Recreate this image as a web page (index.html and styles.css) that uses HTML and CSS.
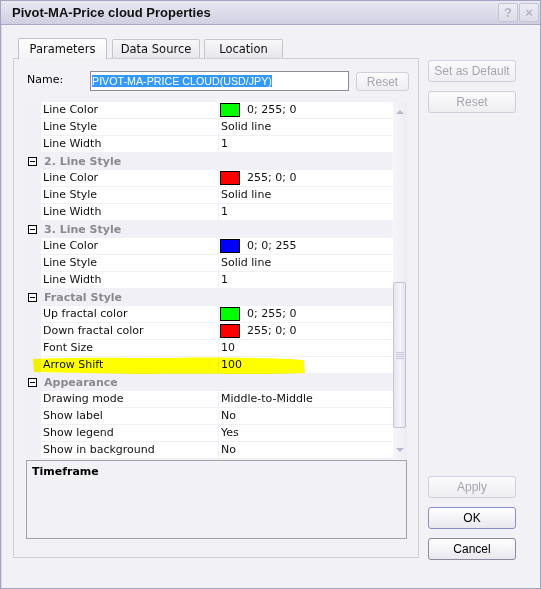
FILE: index.html
```html
<!DOCTYPE html>
<html lang="en">
<head>
    <meta charset="UTF-8">
    <meta name="viewport" content="width=device-width, initial-scale=1.0">
    <title>Pivot-MA-Price cloud Properties</title>
    <link rel="stylesheet" href="styles.css">
</head>
<body>
    <div class="window">
        <div class="titlebar">
            <span class="title">Pivot-MA-Price cloud Properties</span>
            <div class="title-buttons">
                <span class="tbtn">?</span>
                <span class="tbtn">&#215;</span>
            </div>
        </div>

        <div class="client">
            <div class="main">
                <div class="tabs">
                    <div class="tab active">Parameters</div>
                    <div class="tab source">Data Source</div>
                    <div class="tab location">Location</div>
                </div>

                <div class="panel">
                    <div class="name-row">
                        <label class="name-label">Name:</label>
                        <div class="name-input"><span class="selected">PIVOT-MA-PRICE CLOUD(USD/JPY)</span></div>
                        <button class="btn small" disabled>Reset</button>
                    </div>

                    <div class="pg">
                        <div class="pg-rows">
                            <div class="row"><span class="gut"></span><span class="cell">Line Color</span><span class="cell"><i class="swatch green"></i>0; 255; 0</span></div>
                            <div class="row"><span class="gut"></span><span class="cell">Line Style</span><span class="cell">Solid line</span></div>
                            <div class="row"><span class="gut"></span><span class="cell">Line Width</span><span class="cell">1</span></div>

                            <div class="group"><span class="minus"></span>2. Line Style</div>
                            <div class="row"><span class="gut"></span><span class="cell">Line Color</span><span class="cell"><i class="swatch red"></i>255; 0; 0</span></div>
                            <div class="row"><span class="gut"></span><span class="cell">Line Style</span><span class="cell">Solid line</span></div>
                            <div class="row"><span class="gut"></span><span class="cell">Line Width</span><span class="cell">1</span></div>

                            <div class="group"><span class="minus"></span>3. Line Style</div>
                            <div class="row"><span class="gut"></span><span class="cell">Line Color</span><span class="cell"><i class="swatch blue"></i>0; 0; 255</span></div>
                            <div class="row"><span class="gut"></span><span class="cell">Line Style</span><span class="cell">Solid line</span></div>
                            <div class="row"><span class="gut"></span><span class="cell">Line Width</span><span class="cell">1</span></div>

                            <div class="group"><span class="minus"></span>Fractal Style</div>
                            <div class="row"><span class="gut"></span><span class="cell">Up fractal color</span><span class="cell"><i class="swatch green"></i>0; 255; 0</span></div>
                            <div class="row"><span class="gut"></span><span class="cell">Down fractal color</span><span class="cell"><i class="swatch red"></i>255; 0; 0</span></div>
                            <div class="row"><span class="gut"></span><span class="cell">Font Size</span><span class="cell">10</span></div>
                            <div class="row"><span class="gut"></span><span class="cell">Arrow Shift</span><span class="cell">100</span></div>

                            <div class="group"><span class="minus"></span>Appearance</div>
                            <div class="row"><span class="gut"></span><span class="cell">Drawing mode</span><span class="cell">Middle-to-Middle</span></div>
                            <div class="row"><span class="gut"></span><span class="cell">Show label</span><span class="cell">No</span></div>
                            <div class="row"><span class="gut"></span><span class="cell">Show legend</span><span class="cell">Yes</span></div>
                            <div class="row"><span class="gut"></span><span class="cell">Show in background</span><span class="cell">No</span></div>

                            <!-- marker stroke over "Arrow Shift" -->
                            <svg class="marker" width="274" height="19" viewBox="0 0 274 19">
                                <path d="M1 3 C40 1 90 2 140 2 C190 1 240 2 272 4 L273 17 C230 19 170 17 110 18 C70 17 30 17 2 16 Z" fill="#ffff00"/>
                            </svg>
                        </div>

                        <div class="scrollbar">
                            <span class="arrow up"></span>
                            <div class="track">
                                <div class="thumb"><span class="grip"></span></div>
                            </div>
                            <span class="arrow down"></span>
                        </div>
                    </div>

                    <div class="description">
                        <div class="desc-title">Timeframe</div>
                    </div>
                </div>
            </div>

            <div class="side">
                <div class="side-top">
                    <button class="btn" disabled>Set as Default</button>
                    <button class="btn" disabled>Reset</button>
                </div>
                <div class="side-bottom">
                    <button class="btn" disabled>Apply</button>
                    <button class="btn ok">OK</button>
                    <button class="btn">Cancel</button>
                </div>
            </div>
        </div>
    </div>
</body>
</html>
```

FILE: styles.css
```css
body {
    margin: 0;
    background-color: #f1f1f6;
    font-family: "DejaVu Sans", Verdana, sans-serif;
    font-size: 11px;
    color: #000;
}
.window {
    box-sizing: border-box;
    width: 541px;
    height: 589px;
    border: 1px solid #a3a3c2;
    box-shadow: inset 1px 0 0 #d8d8e6;
    background-color: #f1f1f6;
}
.titlebar {
    box-sizing: border-box;
    height: 24px;
    display: flex;
    align-items: center;
    justify-content: space-between;
    padding: 0 1px 0 11px;
    background: linear-gradient(#e9e9f2, #cfcfe2);
    border-bottom: 1px solid #a8a8c4;
}
.title {
    font-family: "Liberation Sans", Arial, sans-serif;
    font-weight: bold;
    font-size: 13px;
    color: #111;
}
.title-buttons {
    display: flex;
    gap: 1px;
}
.tbtn {
    box-sizing: border-box;
    width: 20px;
    height: 19px;
    border: 1px solid #c4c4d4;
    border-radius: 2px;
    background: linear-gradient(#ececf4, #dcdce8);
    color: #b4b4c6;
    font-family: "Liberation Sans", Arial, sans-serif;
    font-weight: bold;
    font-size: 13px;
    line-height: 17px;
    text-align: center;
}
.client {
    display: flex;
    align-items: flex-start;
    padding: 13px 0 0 12px;
}
.main {
    width: 406px;
}
.tabs {
    display: flex;
    align-items: flex-end;
    padding-left: 5px;
    height: 20px;
}
.tab {
    box-sizing: border-box;
    width: 88px;
    height: 19px;
    margin-right: 4px;
    border: 1px solid #c6c6cc;
    border-bottom: none;
    border-radius: 2px 2px 0 0;
    background: linear-gradient(#f8f8fa, #e6e6ec);
    line-height: 18px;
    text-align: center;
    font-size: 11.5px;
    color: #111;
}
.tab.location {
    width: 79px;
}
.tab.active {
    width: 89px;
    height: 21px;
    margin-bottom: -1px;
    margin-right: 5px;
    background: linear-gradient(#ffffff, #f3f3f6);
    border-color: #c0c0c8;
    position: relative;
    line-height: 20px;
}
.panel {
    box-sizing: border-box;
    height: 500px;
    border: 1px solid #cfcfd6;
    padding: 12px 0 0 12px;
}
.name-row {
    display: flex;
    align-items: center;
    height: 20px;
}
.name-label {
    width: 63px;
    padding-left: 1px;
    margin-top: -3px;
}
.name-input {
    box-sizing: border-box;
    width: 259px;
    height: 20px;
    border: 1px solid #8d8d98;
    background-color: #fff;
    padding: 1px 0 0 1px;
    font-family: "Liberation Sans", Arial, sans-serif;
    font-size: 10.7px;
    line-height: 16px;
}
.selected {
    background-color: #3399ff;
    color: #fff;
}
.btn {
    box-sizing: border-box;
    width: 88px;
    height: 22px;
    border: 1px solid #8c8c9c;
    border-radius: 3px;
    background: linear-gradient(#ffffff, #e8e8ee);
    font-family: "Liberation Sans", Arial, sans-serif;
    font-size: 12px;
    color: #000;
    padding: 0;
}
.btn:disabled {
    border-color: #d0d0dc;
    color: #a6a6b0;
    background: linear-gradient(#fbfbfc, #eeeef2);
}
.btn.small {
    width: 53px;
    height: 19px;
    margin-left: 7px;
    margin-top: 1px;
}
.btn.ok {
    border-color: #8e8ec6;
}
.pg {
    display: flex;
    margin-top: 11px;
    width: 381px;
    height: 357px;
}
.pg-rows {
    position: relative;
    width: 366px;
    background-color: #f0f0f6;
}
.row {
    display: grid;
    grid-template-columns: 14px 177px 174px;
    column-gap: 1px;
    height: 17px;
}
.row .cell {
    background-color: #fff;
    height: 16px;
    line-height: 16px;
    padding-left: 2px;
    white-space: nowrap;
    display: flex;
    align-items: center;
    color: #111;
}
.row .cell:last-child {
    padding-left: 2px;
}
.swatch {
    box-sizing: border-box;
    width: 20px;
    height: 14px;
    border: 1px solid #000;
    margin: 0 7px 0 -1px;
}
.swatch.green { background-color: #00ff00; }
.swatch.red { background-color: #ff0000; }
.swatch.blue { background-color: #0000ff; }
.group {
    display: flex;
    align-items: center;
    height: 17px;
    font-weight: bold;
    color: #8a8a8e;
}
.minus {
    box-sizing: border-box;
    position: relative;
    width: 9px;
    height: 9px;
    margin: 0 7px 0 2px;
    border: 1px solid #000;
    background-color: #fff;
}
.minus::after {
    content: "";
    position: absolute;
    left: 1px;
    top: 3px;
    width: 5px;
    height: 1px;
    background-color: #000;
}
.marker {
    position: absolute;
    left: 6px;
    top: 254px;
    mix-blend-mode: multiply;
}
.scrollbar {
    width: 15px;
    display: flex;
    flex-direction: column;
    background: linear-gradient(90deg, #f6f6fa, #ececf3);
}
.arrow {
    height: 19px;
    display: flex;
    justify-content: center;
    align-items: center;
}
.arrow::before {
    content: "";
    border-left: 4px solid transparent;
    border-right: 4px solid transparent;
}
.arrow.up::before {
    border-bottom: 4px solid #b8b8cc;
}
.arrow.down::before {
    border-top: 4px solid #b8b8cc;
}
.track {
    flex: 1;
}
.thumb {
    box-sizing: border-box;
    margin: 161px 1px 0 1px;
    height: 146px;
    border: 1px solid #c4c4d8;
    border-radius: 2px;
    background: linear-gradient(90deg, #e6e6f0, #f4f4f9 60%, #e2e2ec);
    display: flex;
    justify-content: center;
    align-items: center;
}
.grip {
    width: 8px;
    height: 7px;
    background: repeating-linear-gradient(#c6c6d8 0 1px, transparent 1px 2px);
}
.description {
    box-sizing: border-box;
    width: 381px;
    height: 79px;
    margin-top: 1px;
    border: 1px solid #a2a2a8;
    padding: 4px 5px;
}
.desc-title {
    font-weight: bold;
}
.side {
    width: 88px;
    height: 500px;
    margin: 22px 0 0 9px;
    display: flex;
    flex-direction: column;
    justify-content: space-between;
}
.side-top, .side-bottom {
    display: flex;
    flex-direction: column;
    gap: 9px;
}
```
